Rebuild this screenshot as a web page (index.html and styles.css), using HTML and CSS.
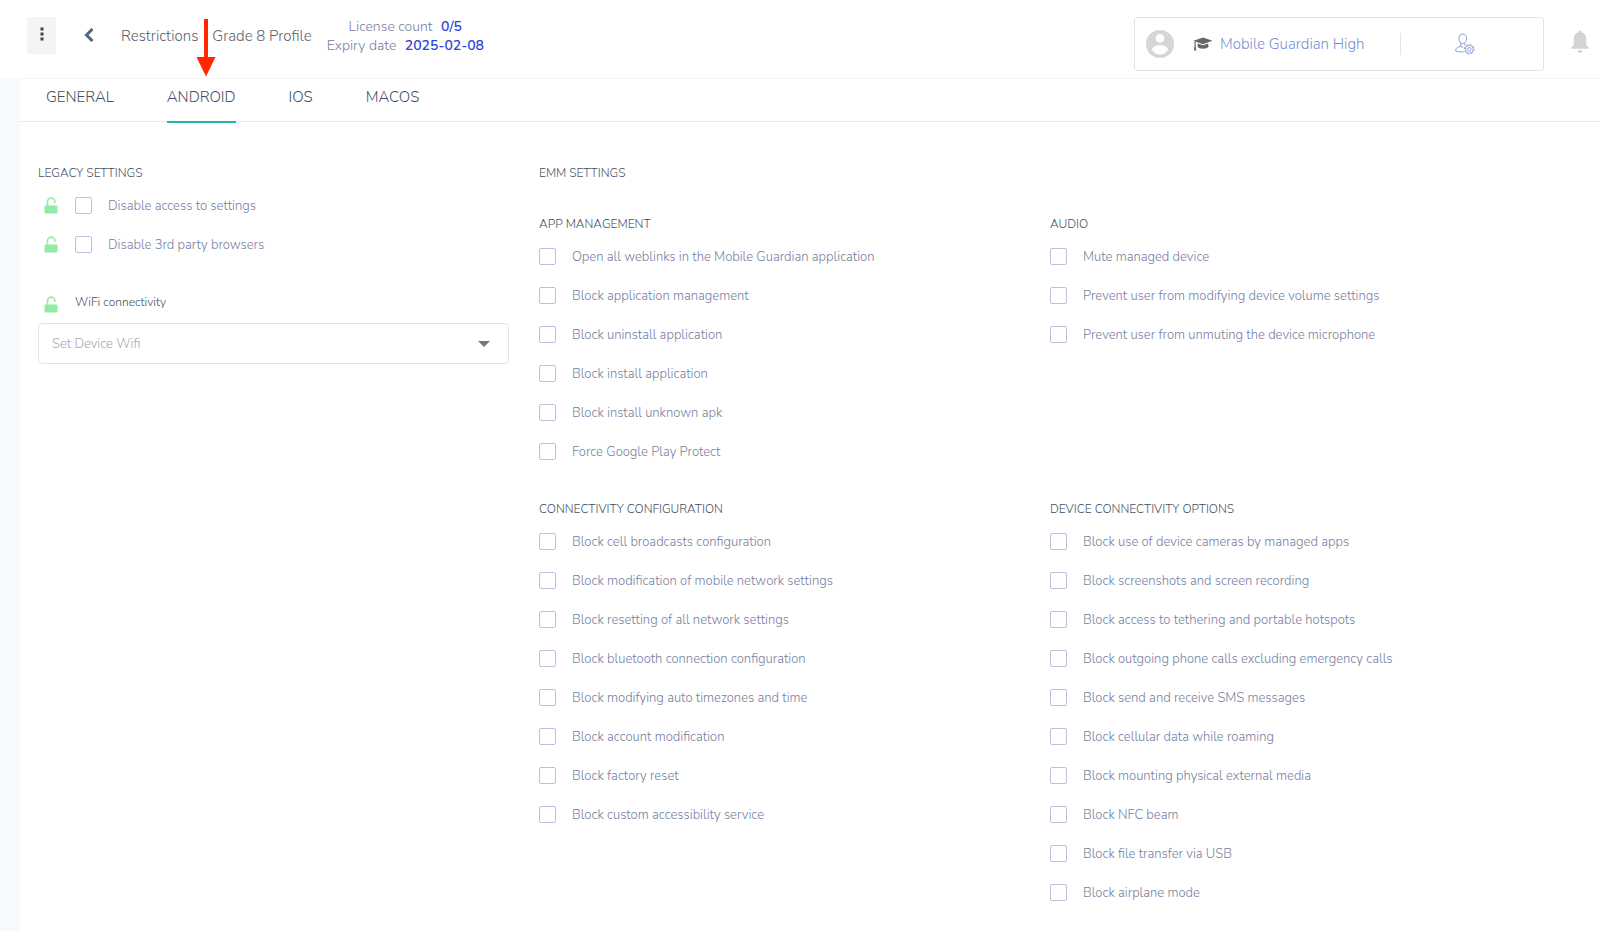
FILE: index.html
```html
<!DOCTYPE html>
<html lang="en">
<head>
  <meta charset="UTF-8" />
  <meta name="viewport" content="width=device-width, initial-scale=1.0" />
  <title>Restrictions - Grade 8 Profile</title>
  <link rel="stylesheet" href="styles.css">
</head>
<body>

  <svg class="sprite" aria-hidden="true">
    <symbol id="lock" viewBox="0 0 14 17">
      <rect x="0.5" y="8.5" width="13" height="8" rx="1"/>
      <path d="M3.500 9V5a3.700 3.700 0 0 1 7.400-.3V6" fill="none" stroke="currentColor" stroke-width="1.600"/>
    </symbol>
  </svg>

  <header class="topbar">
    <button class="menu-btn" title="Menu">
      <svg width="4" height="14" viewBox="0 0 4 14"><path d="M.5.5h3v3h-3zM.5 5.500h3v3h-3zM.5 10.500h3v3h-3z"/></svg>
    </button>
    <a class="back" href="#" title="Back">
      <svg width="10" height="14" viewBox="0 0 10 14"><path d="M8.500 1L2.500 7l6 6" fill="none" stroke="currentColor" stroke-width="3"/></svg>
    </a>
    <div class="crumbs"><span>Restrictions</span><span>Grade 8 Profile</span></div>
    <div class="license">
      <div>License count <b>0/5</b></div>
      <div>Expiry date <b>2025-02-08</b></div>
    </div>

    <div class="account">
      <svg class="avatar" width="28" height="28" viewBox="0 0 28 28">
        <path fill-rule="evenodd" d="M14 0a14 14 0 1 1 0 28 14 14 0 0 1 0-28zM14 4a4.300 4.300 0 1 0 0 8.600a4.300 4.300 0 0 0 0-8.600zM5.800 19.500c1.700 3 4.700 5 8.200 5s6.500-2 8.200-5c-.1-2.800-5.500-4.300-8.200-4.300s-8.100 1.500-8.200 4.300z"/>
      </svg>
      <a class="school" href="#">
        <svg class="cap" width="20" height="14" viewBox="0 0 20 14">
          <path d="M10 .5L19.500 3.800 10 7.200.5 3.800z"/>
          <path d="M4.800 6.400L10 8.300l5.200-1.900.3 3.400c-1 2.600-10 2.600-11 0z"/>
          <path d="M1.500 4.200h1.200v4.600l.6 4.700H.9l.6-4.700z"/>
        </svg>
        Mobile Guardian High
      </a>
      <button class="admin-btn" title="Admin settings">
        <svg width="20" height="22" viewBox="0 0 20 22">
          <g fill="none" stroke="currentColor">
            <path d="M4 5.500C4 2.500 5.500 1 7.800 1s3.800 1.500 3.800 4.500-1.500 5-3.800 5-3.800-2-3.800-5zM5.800 10v3.200L2.500 14.500C1 15.200.7 16.300.7 18c1.800.7 4.500 1 8 .9M9.800 10v2.500M5.800 13.200l2.500 1.500"/>
            <circle cx="14.300" cy="16.300" r="4"/>
            <circle cx="14.300" cy="16.300" r="4.900" stroke-dasharray="1.700 2.150"/>
            <circle cx="14.300" cy="16.300" r="1.800"/>
          </g>
        </svg>
      </button>
    </div>
    <button class="bell" title="Notifications">
      <svg width="18" height="24" viewBox="0 0 18 24"><path d="M9 .5c1 0 1.500.7 1.500 1.800 3 .7 4.700 3.300 4.700 6.700v6l2.600 2.600v1.200H.2v-1.200L2.800 15V9c0-3.400 1.700-6 4.700-6.700C7.500 1.200 8 .5 9 .5zM6.600 20.300h4.800c0 1.700-1 2.800-2.400 2.800s-2.400-1.100-2.400-2.800z"/></svg>
    </button>

    <svg class="pointer" width="20" height="58" viewBox="0 0 20 58"><path d="M8 0h4v38h7.500L10 57.500.5 38H8z"/></svg>
  </header>

  <div class="page">
    <nav class="tabs">
      <a href="#">GENERAL</a>
      <a href="#" class="active">ANDROID</a>
      <a href="#">IOS</a>
      <a href="#">MACOS</a>
    </nav>

    <main class="content">
      <section class="legacy">
        <h2>LEGACY SETTINGS</h2>
        <div class="locked"><svg class="lock"><use href="#lock"/></svg><label class="option"><input type="checkbox">Disable access to settings</label></div>
        <div class="locked"><svg class="lock"><use href="#lock"/></svg><label class="option"><input type="checkbox">Disable 3rd party browsers</label></div>
        <div class="locked wifi"><svg class="lock"><use href="#lock"/></svg><label for="wifi">WiFi connectivity</label></div>
        <select id="wifi"><option>Set Device Wifi</option></select>
      </section>

      <section class="emm">
        <h2>EMM SETTINGS</h2>
        <div class="groups">
          <div class="group">
            <h3>APP MANAGEMENT</h3>
            <label class="option"><input type="checkbox">Open all weblinks in the Mobile Guardian application</label>
            <label class="option"><input type="checkbox">Block application management</label>
            <label class="option"><input type="checkbox">Block uninstall application</label>
            <label class="option"><input type="checkbox">Block install application</label>
            <label class="option"><input type="checkbox">Block install unknown apk</label>
            <label class="option"><input type="checkbox">Force Google Play Protect</label>
          </div>
          <div class="group">
            <h3>AUDIO</h3>
            <label class="option"><input type="checkbox">Mute managed device</label>
            <label class="option"><input type="checkbox">Prevent user from modifying device volume settings</label>
            <label class="option"><input type="checkbox">Prevent user from unmuting the device microphone</label>
          </div>
          <div class="group">
            <h3>CONNECTIVITY CONFIGURATION</h3>
            <label class="option"><input type="checkbox">Block cell broadcasts configuration</label>
            <label class="option"><input type="checkbox">Block modification of mobile network settings</label>
            <label class="option"><input type="checkbox">Block resetting of all network settings</label>
            <label class="option"><input type="checkbox">Block bluetooth connection configuration</label>
            <label class="option"><input type="checkbox">Block modifying auto timezones and time</label>
            <label class="option"><input type="checkbox">Block account modification</label>
            <label class="option"><input type="checkbox">Block factory reset</label>
            <label class="option"><input type="checkbox">Block custom accessibility service</label>
          </div>
          <div class="group">
            <h3>DEVICE CONNECTIVITY OPTIONS</h3>
            <label class="option"><input type="checkbox">Block use of device cameras by managed apps</label>
            <label class="option"><input type="checkbox">Block screenshots and screen recording</label>
            <label class="option"><input type="checkbox">Block access to tethering and portable hotspots</label>
            <label class="option"><input type="checkbox">Block outgoing phone calls excluding emergency calls</label>
            <label class="option"><input type="checkbox">Block send and receive SMS messages</label>
            <label class="option"><input type="checkbox">Block cellular data while roaming</label>
            <label class="option"><input type="checkbox">Block mounting physical external media</label>
            <label class="option"><input type="checkbox">Block NFC beam</label>
            <label class="option"><input type="checkbox">Block file transfer via USB</label>
            <label class="option"><input type="checkbox">Block airplane mode</label>
          </div>
        </div>
      </section>
    </main>
  </div>

</body>
</html>
```
FILE: styles.css
```css
:root {
  --heading: #3f4e63;
  --text: #76809f;
  --link: #7a8fd0;
  --accent: #1fb5ad;
  --value: #2a45dc;
  --border: #dfe5ef;
}

* {
  box-sizing: border-box;
}

body {
  margin: 0;
  background: #f5fafd;
  color: var(--text);
  font-family: 'Nunito', 'Open Sans', sans-serif;
  font-size: 13px;
  font-weight: 300;
}

a { color: inherit; text-decoration: none; }

button {
  border: none;
  padding: 0;
  background: none;
  cursor: pointer;
}

svg { fill: currentColor; flex: none; }

.sprite { display: none; }

/* top bar */
.topbar {
  position: relative;
  display: flex;
  align-items: flex-start;
  height: 78px;
  padding: 17px 11px 0 27px;
  background: #fff;
}

.menu-btn {
  width: 29px;
  height: 37px;
  border-radius: 2px;
  background: #f4f4f4;
  color: #444;
}

.back {
  display: flex;
  align-items: center;
  height: 36px;
  margin-left: 28px;
  color: #52677f;
}

.crumbs {
  display: flex;
  gap: 14px;
  margin-left: 27px;
  font-size: 15px;
  line-height: 38px;
  color: #5c626b;
}

.license {
  margin-left: 15px;
  font-size: 14px;
  line-height: 19px;
  text-align: center;
}

.license b {
  margin-left: 5px;
  font-weight: 600;
  color: var(--value);
}

.account {
  display: flex;
  align-items: center;
  width: 410px;
  height: 54px;
  margin-left: auto;
  padding-left: 11px;
  border: 1px solid var(--border);
  border-radius: 3px;
}

.avatar { color: #d6d6d6; }

.school {
  display: flex;
  align-items: center;
  gap: 7px;
  margin-left: 19px;
  font-size: 15px;
  color: var(--link);
}

.cap { color: #666; }

.admin-btn {
  margin-left: auto;
  width: 143px;
  height: 22px;
  padding-right: 14px;
  border-left: 1px solid var(--border);
  color: #8fa3d8;
}

.bell {
  margin: 13px 0 0 27px;
  color: #d3d3d3;
}

.pointer {
  position: absolute;
  left: 196px;
  top: 19px;
  color: #ff2600;
}

/* page */
.page {
  min-height: calc(100vh - 78px);
  margin-left: 20px;
  border-top: 1px solid #f6f6f8;
  background: #fff;
}

.tabs {
  display: flex;
  gap: 53px;
  padding: 0 26px;
  border-bottom: 1px solid #ececee;
  font-size: 15px;
  line-height: 36px;
  color: var(--heading);
}

/* the underline sits on top of the bar's own border */
.tabs a {
  height: 44px;
  margin-bottom: -2px;
  border-bottom: 2px solid transparent;
}

.tabs .active { border-color: var(--accent); }

.content {
  display: grid;
  grid-template-columns: 501fr 1022fr;
  padding: 41px 39px 14px 18px;
}

h2, h3 {
  margin: 0 0 3px;
  font-size: 12px;
  font-weight: 300;
  line-height: 20px;
  color: var(--heading);
}

.legacy { padding-right: 30px; }

.groups {
  display: grid;
  grid-template-columns: 1fr 1fr;
  row-gap: 28px;
  margin-top: 31px;
}

.option {
  display: flex;
  align-items: center;
  gap: 16px;
  height: 39px;
}

.option input {
  appearance: none;
  width: 17px;
  height: 17px;
  margin: 0;
  border: 1px solid #b9c1da;
  border-radius: 2px;
}

.option input:checked { background: var(--accent); }

.locked {
  display: flex;
  align-items: center;
  gap: 17px;
  padding-left: 6px;
}

.lock {
  width: 14px;
  height: 17px;
  color: #90eda3;
}

.wifi {
  align-items: flex-end;
  height: 20px;
  margin: 29px 0 10px;
  font-size: 12px;
  line-height: 22px;
  color: var(--heading);
}

#wifi {
  appearance: none;
  width: 100%;
  height: 41px;
  padding: 0 13px;
  border: 1px solid var(--border);
  border-radius: 4px;
  background: #fff url("data:image/svg+xml,%3Csvg xmlns='http://www.w3.org/2000/svg' width='12' height='6'%3E%3Cpath d='M0 0h12L6 6z' fill='%23777'/%3E%3C/svg%3E") no-repeat right 18px center;
  font: inherit;
  color: #a5a9b0;
}
```
